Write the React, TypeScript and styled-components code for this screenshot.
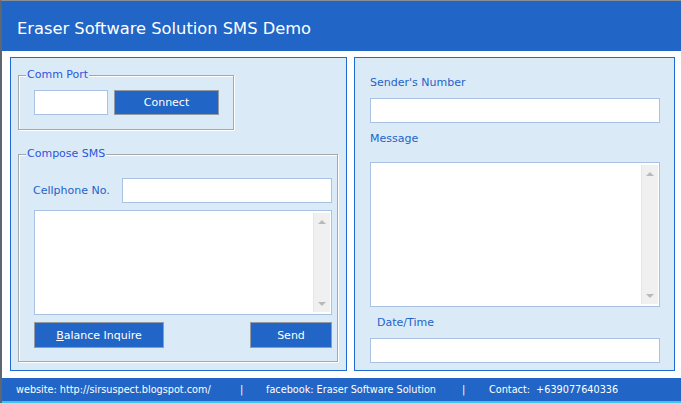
import React from 'react';
import styled, { createGlobalStyle } from 'styled-components';

const GlobalStyle = createGlobalStyle`
  * { box-sizing: border-box; }
  body { margin: 0; background: #fff; }
`;

const FONT = `'DejaVu Sans', Verdana, sans-serif`;
const BLUE = '#2166c6';

const Window = styled.div`
  width: 681px;
  height: 403px;
  display: flex;
  flex-direction: column;
  border-left: 2px solid #5f6670;
  border-top: 1px solid #8a8f96;
  background: #fff;
  font-family: ${FONT};
  overflow: hidden;
`;

const Header = styled.div`
  height: 50px;
  flex: none;
  background: ${BLUE};
  color: #fff;
  display: flex;
  align-items: center;
  padding: 4px 0 0 15px;
  font-size: 16.3px;
`;

const Body = styled.div`
  height: 327px;
  flex: none;
  display: flex;
  gap: 7px;
  padding: 6px 6px 7px 8px;
`;

const Panel = styled.div<{ $w: number }>`
  width: ${(p) => p.$w}px;
  height: 314px;
  border: 1px solid #1f6bd1;
  background: #dbeaf7;
  display: flex;
  flex-direction: column;
`;

const LeftPanel = styled(Panel)`
  padding: 17px 0 0 7px;
`;

const RightPanel = styled(Panel)`
  padding: 0 0 0 15px;
`;

const GroupBox = styled.div<{ $w: number; $h: number; $top?: number }>`
  position: relative;
  width: ${(p) => p.$w}px;
  height: ${(p) => p.$h}px;
  margin-top: ${(p) => p.$top ?? 0}px;
  border: 1px solid #a3a6aa;
  box-shadow: 1px 1px 0 #fff, inset 1px 1px 0 #fff;
`;

const Legend = styled.span`
  position: absolute;
  top: -8px;
  left: 7px;
  padding: 0 1px;
  background: #dbeaf7;
  color: #2c55dc;
  font-size: 11px;
  line-height: 14px;
`;

const Row = styled.div<{ $top: number; $left: number }>`
  display: flex;
  align-items: center;
  margin: ${(p) => p.$top}px 0 0 ${(p) => p.$left}px;
`;

const TextBox = styled.input<{ $w: number; $top?: number }>`
  width: ${(p) => p.$w}px;
  height: 25px;
  margin-top: ${(p) => p.$top ?? 0}px;
  border: 1px solid #a9c1e3;
  background: #fff;
  outline: none;
  padding: 0 4px;
  font-family: ${FONT};
  font-size: 11px;
`;

const Button = styled.button<{ $w: number; $h?: number; $left?: number }>`
  width: ${(p) => p.$w}px;
  height: ${(p) => p.$h ?? 25}px;
  margin-left: ${(p) => p.$left ?? 0}px;
  background: ${BLUE};
  border: 1px solid #959ba3;
  color: #fff;
  font-family: ${FONT};
  font-size: 11px;
  padding: 0;
  cursor: pointer;
  & u { text-decoration: underline; }
`;

const Label = styled.span<{ $w?: number }>`
  width: ${(p) => (p.$w ? `${p.$w}px` : 'auto')};
  color: #1f63c8;
  font-size: 11px;
`;

const FieldLabel = styled.div<{ $top: number; $left?: number }>`
  margin: ${(p) => p.$top}px 0 0 ${(p) => p.$left ?? 0}px;
  color: #1f63c8;
  font-size: 11px;
  line-height: 14px;
`;

const Memo = styled.div<{ $w: number; $h: number; $top: number; $left: number }>`
  width: ${(p) => p.$w}px;
  height: ${(p) => p.$h}px;
  margin: ${(p) => p.$top}px 0 0 ${(p) => p.$left}px;
  border: 1px solid #a9c1e3;
  background: #fff;
  display: flex;
  padding: 2px 1px 2px 0;
`;

const MemoArea = styled.textarea`
  flex: 1;
  border: none;
  outline: none;
  resize: none;
  font-family: ${FONT};
  font-size: 11px;
  padding: 3px;
`;

const ScrollBar = styled.div`
  width: 17px;
  background: #f0f0f0;
  border-left: 1px solid #e6e6e6;
  display: flex;
  flex-direction: column;
  justify-content: space-between;
  align-items: center;
  padding: 7px 0 6px;
`;

const Arrow = styled.div<{ $down?: boolean }>`
  width: 0;
  height: 0;
  border-left: 4px solid transparent;
  border-right: 4px solid transparent;
  ${(p) =>
    p.$down ? 'border-top: 4px solid #b9b9b9;' : 'border-bottom: 4px solid #b9b9b9;'}
`;

const ButtonRow = styled.div`
  display: flex;
  justify-content: space-between;
  width: 298px;
  margin: 7px 0 0 15px;
`;

const Footer = styled.div`
  height: 25px;
  flex: none;
  background: ${BLUE};
  border-bottom: 2px solid #3cc6ea;
  color: #fff;
  font-size: 9.7px;
  display: flex;
  align-items: center;
  padding: 0 0 1px 14px;
`;

const FooterItem = styled.span<{ $w: number }>`
  width: ${(p) => p.$w}px;
  flex: none;
  white-space: nowrap;
`;

type MemoProps = { w: number; h: number; top: number; left?: number };

function MemoBox({ w, h, top, left = 0 }: MemoProps) {
  return (
    <Memo $w={w} $h={h} $top={top} $left={left}>
      <MemoArea />
      <ScrollBar>
        <Arrow />
        <Arrow $down />
      </ScrollBar>
    </Memo>
  );
}

export default function App() {
  return (
    <>
      <GlobalStyle />
      <Window>
        <Header>Eraser Software Solution SMS Demo</Header>
        <Body>
          <LeftPanel $w={337}>
            <GroupBox $w={216} $h={55}>
              <Legend>Comm Port</Legend>
              <Row $top={14} $left={15}>
                <TextBox $w={74} />
                <Button $w={105} $left={6}>
                  Connect
                </Button>
              </Row>
            </GroupBox>
            <GroupBox $w={320} $h={208} $top={24}>
              <Legend>Compose SMS</Legend>
              <Row $top={23} $left={14}>
                <Label $w={89}>Cellphone No.</Label>
                <TextBox $w={210} />
              </Row>
              <MemoBox w={298} h={105} top={7} left={15} />
              <ButtonRow>
                <Button $w={130} $h={26}>
                  <u>B</u>alance Inquire
                </Button>
                <Button $w={82} $h={26}>
                  Send
                </Button>
              </ButtonRow>
            </GroupBox>
          </LeftPanel>
          <RightPanel $w={321}>
            <FieldLabel $top={18}>Sender's Number</FieldLabel>
            <TextBox $w={290} $top={8} />
            <FieldLabel $top={9}>Message</FieldLabel>
            <MemoBox w={290} h={145} top={16} />
            <FieldLabel $top={9} $left={7}>
              Date/Time
            </FieldLabel>
            <TextBox $w={290} $top={8} />
          </RightPanel>
        </Body>
        <Footer>
          <FooterItem $w={224}>website: http://sirsuspect.blogspot.com/</FooterItem>
          <FooterItem $w={26}>|</FooterItem>
          <FooterItem $w={196}>facebook: Eraser Software Solution</FooterItem>
          <FooterItem $w={27}>|</FooterItem>
          <FooterItem $w={160}>Contact:&nbsp; +639077640336</FooterItem>
        </Footer>
      </Window>
    </>
  );
}
